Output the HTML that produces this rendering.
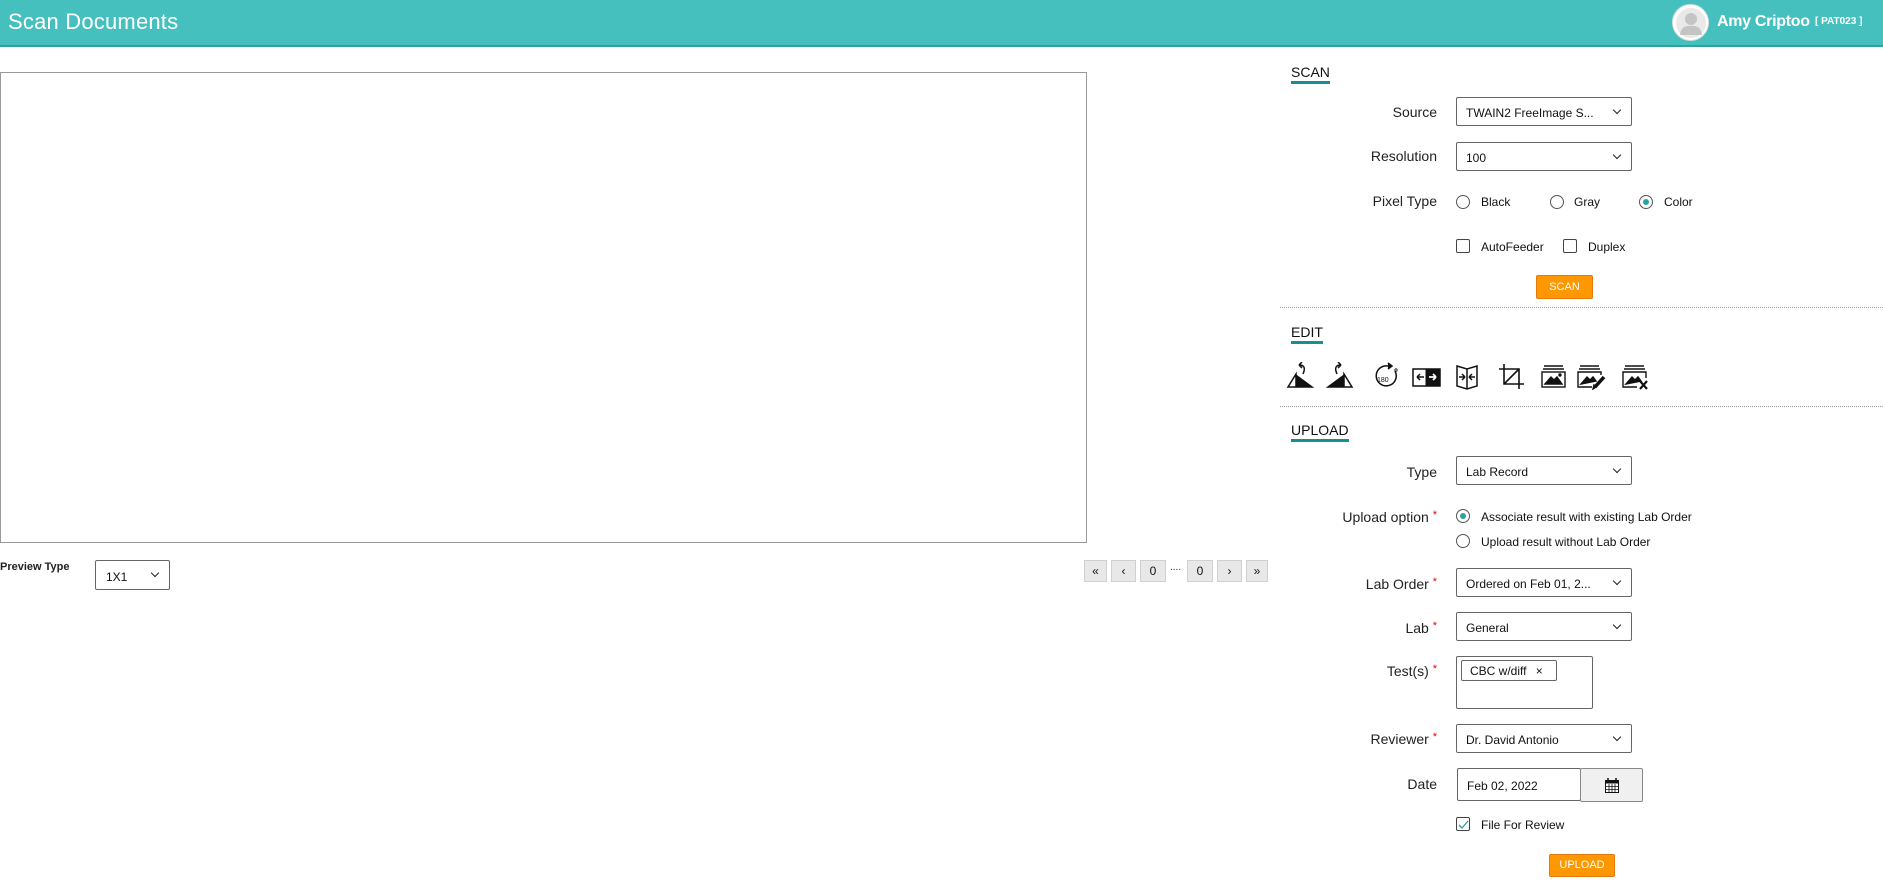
<!DOCTYPE html>
<html><head><meta charset="utf-8">
<style>
*{box-sizing:border-box;margin:0;padding:0}
body{width:1883px;height:891px;overflow:hidden;background:#fff;font-family:"Liberation Sans",sans-serif;color:#222;position:relative}
.a{position:absolute}
.hdr{left:0;top:0;width:1883px;height:47px;background:#46c0bf;border-bottom:2px solid #2ea3a2}
.title{left:8px;top:9px;font-size:22px;color:#fff;font-weight:300;letter-spacing:0.2px}
.lbl{font-size:14px;color:#222;text-align:right;width:200px;left:1237px}
.req{color:#e00;font-size:11px;vertical-align:top}
.sel{left:1456px;width:176px;height:29px;border:1px solid #666;border-radius:2px;font-size:12px;padding:8px 9px;color:#111}
.sel:after{content:"";position:absolute;right:11px;top:9px;width:5px;height:5px;border-right:1.5px solid #222;border-bottom:1.5px solid #222;transform:rotate(45deg)}
.rad{width:14px;height:14px;border:1px solid #555;border-radius:50%;background:#fff}
.rad.on:after{content:"";position:absolute;left:3px;top:3px;width:6px;height:6px;border-radius:50%;background:#2aa3a0}
.cb{width:14px;height:14px;border:1px solid #444;border-radius:2px}
.sm{font-size:12px;color:#111}
.sec{font-size:14px;color:#111;border-bottom:3px solid #14918c;padding-bottom:1px;left:1291px}
.dot{left:1280px;width:603px;border-top:1px dotted #999}
.btn{background:#ff9800;border:1px solid #e5780c;color:#fff;font-size:11px;text-align:center;border-radius:2px}
.pg{top:560px;height:22px;background:#e8e8e8;border:1px solid #d0d0d0;font-size:12px;text-align:center;line-height:20px;color:#111}
</style></head><body>
<div class="a hdr"></div>
<div class="a title">Scan Documents</div>
<div class="a" style="left:1672px;top:4px;width:37px;height:37px;border-radius:50%;background:#fff;border:1px solid #ddd;overflow:hidden">
<svg width="37" height="37" viewBox="0 0 37 37"><circle cx="18" cy="18" r="15" fill="#e9e9e9"/><circle cx="18" cy="14" r="6" fill="#c4c4c4"/><path d="M7 30 Q8 20 18 21 Q28 20 29 30 Z" fill="#c4c4c4"/></svg></div>
<div class="a" style="left:1717px;top:13px;font-size:16px;color:#fff;font-weight:bold;letter-spacing:-0.3px;white-space:nowrap">Amy Criptoo</div>
<div class="a" style="left:1815px;top:16px;font-size:10px;color:#fff;font-weight:bold;white-space:nowrap">[ PAT023 ]</div>

<div class="a" style="left:0;top:72px;width:1087px;height:471px;border:1px solid #999"></div>
<div class="a" style="left:0;top:561px;font-size:11px;font-weight:bold;color:#222">Preview Type</div>
<div class="a sel" style="left:95px;top:560px;width:75px;height:30px;padding:9px 10px;font-size:12px">1X1</div>

<div class="a pg" style="left:1084px;width:23px">«</div>
<div class="a pg" style="left:1111px;width:25px">‹</div>
<div class="a pg" style="left:1140px;width:26px">0</div>
<div class="a" style="left:1170px;top:562px;font-size:10px">....</div>
<div class="a pg" style="left:1187px;width:26px">0</div>
<div class="a pg" style="left:1217px;width:25px">›</div>
<div class="a pg" style="left:1246px;width:22px">»</div>

<div class="a sec" style="top:64px">SCAN</div>
<div class="a lbl" style="top:104px">Source</div>
<div class="a sel" style="top:97px">TWAIN2 FreeImage S...</div>
<div class="a lbl" style="top:148px">Resolution</div>
<div class="a sel" style="top:142px">100</div>
<div class="a lbl" style="top:193px">Pixel Type</div>
<div class="a rad" style="left:1456px;top:195px"></div><div class="a sm" style="left:1481px;top:195px">Black</div>
<div class="a rad" style="left:1550px;top:195px"></div><div class="a sm" style="left:1574px;top:195px">Gray</div>
<div class="a rad on" style="left:1639px;top:195px"></div><div class="a sm" style="left:1664px;top:195px">Color</div>
<div class="a cb" style="left:1456px;top:239px"></div><div class="a sm" style="left:1481px;top:240px">AutoFeeder</div>
<div class="a cb" style="left:1563px;top:239px"></div><div class="a sm" style="left:1588px;top:240px">Duplex</div>
<div class="a btn" style="left:1536px;top:275px;width:57px;height:24px;line-height:22px">SCAN</div>
<div class="a dot" style="top:307px"></div>

<div class="a sec" style="top:324px">EDIT</div>
<svg class="a" style="left:1286px;top:362px" width="380" height="28" viewBox="0 0 380 28" fill="#111" stroke="#111">
<g stroke-width="1.5" fill="none"><path d="M2 25 L10 12 L10 25 Z"/><path d="M11 25 L26 25 L11 14 Z" fill="#111"/><path d="M17 12 Q21 3 13 3 M13 3 L16 0 M13 3 L16 6"/></g>
<g transform="translate(42 0)" stroke-width="1.5" fill="none"><path d="M24 25 L16 12 L16 25 Z"/><path d="M15 25 L0 25 L15 14 Z" fill="#111"/><path d="M9 12 Q5 3 13 3 M13 3 L10 0 M13 3 L10 6"/></g>
<g transform="translate(88 0)" fill="none" stroke-width="1.5"><path d="M14 4 A10 10 0 1 0 21 9"/><path d="M14 1 L18 4 L14 7" fill="#111"/><text x="3" y="20" font-size="7" stroke="none" fill="#111" font-family="Liberation Sans">180</text><circle cx="22" cy="8" r="1.2" stroke-width="0.8"/></g>
<g transform="translate(127 4)"><rect x="0" y="3" width="27" height="17" fill="#fff" stroke-width="1.5"/><rect x="13" y="3" width="14" height="17"/><path d="M4 11 L11 11 M4 11 L7 8 M4 11 L7 14" stroke-width="1.5" fill="none"/><path d="M16 11 L23 11 M23 11 L20 8 M23 11 L20 14" stroke="#fff" stroke-width="1.8" fill="none"/></g>
<g transform="translate(170 2)" fill="none" stroke-width="1.5"><path d="M1 2 L11 5 L21 2 L21 22 L11 25 L1 22 Z M11 5 L11 25"/><path d="M3 13 L9 13 M9 13 L6 10 M9 13 L6 16 M19 13 L13 13 M13 13 L16 10 M13 13 L16 16"/></g>
<g transform="translate(213 2)" fill="none" stroke-width="1.6"><path d="M5 0 L5 20 L25 20 M0 5 L20 5 L20 25 M5 20 L20 5"/></g>
<g transform="translate(256 3)" fill="none" stroke-width="1.4"><path d="M2 1 L21 1 M1 4 L22 4"/><rect x="0" y="7" width="23" height="15"/><path d="M3 19 L9 12 L12 15 L15 12 L20 19 Z" fill="#111"/><circle cx="18" cy="10" r="1" fill="#111"/></g>
<g transform="translate(292 3)" fill="none" stroke-width="1.4"><path d="M2 1 L21 1 M1 4 L22 4"/><path d="M23 10 L23 7 L0 7 L0 22 L14 22"/><path d="M3 19 L9 12 L12 15 L15 12 L18 16 Z" fill="#111"/><path d="M17 22 L26 12" stroke-width="3.5"/><path d="M15 24 L16 20 L18 22 Z" fill="#111"/></g>
<g transform="translate(337 3)" fill="none" stroke-width="1.4"><path d="M2 1 L21 1 M1 4 L22 4"/><path d="M23 13 L23 7 L0 7 L0 22 L14 22"/><path d="M3 19 L9 12 L12 15 L15 12 L18 16 Z" fill="#111"/><path d="M17 16 L24 24 M24 16 L17 24" stroke-width="2.2"/></g>
</svg>
<div class="a dot" style="top:406px"></div>

<div class="a sec" style="top:422px">UPLOAD</div>
<div class="a lbl" style="top:464px">Type</div>
<div class="a sel" style="top:456px">Lab Record</div>
<div class="a lbl" style="top:509px">Upload option <span class="req">*</span></div>
<div class="a rad on" style="left:1456px;top:509px"></div><div class="a sm" style="left:1481px;top:510px">Associate result with existing Lab Order</div>
<div class="a rad" style="left:1456px;top:534px"></div><div class="a sm" style="left:1481px;top:535px">Upload result without Lab Order</div>
<div class="a lbl" style="top:576px">Lab Order <span class="req">*</span></div>
<div class="a sel" style="top:568px">Ordered on Feb 01, 2...</div>
<div class="a lbl" style="top:620px">Lab <span class="req">*</span></div>
<div class="a sel" style="top:612px">General</div>
<div class="a lbl" style="top:663px">Test(s) <span class="req">*</span></div>
<div class="a" style="left:1456px;top:656px;width:137px;height:53px;border:1px solid #666;border-radius:2px"></div>
<div class="a sm" style="left:1461px;top:660px;width:96px;height:21px;border:1px solid #666;border-radius:2px;padding:3px 8px">CBC w/diff <span style="margin-left:6px">×</span></div>
<div class="a lbl" style="top:731px">Reviewer <span class="req">*</span></div>
<div class="a sel" style="top:724px">Dr. David Antonio</div>
<div class="a lbl" style="top:776px">Date</div>
<div class="a sm" style="left:1457px;top:768px;width:124px;height:33px;border:1px solid #666;border-radius:2px;padding:10px 9px">Feb 02, 2022</div>
<div class="a" style="left:1580px;top:768px;width:63px;height:34px;border:1px solid #888;border-radius:2px;background:#f0f0f0">
<svg class="a" style="left:24px;top:9px" width="14" height="15" viewBox="0 0 14 15"><rect x="0.5" y="2.5" width="13" height="12" fill="#fff" stroke="#111"/><rect x="0.5" y="2.5" width="13" height="3" fill="#111"/><path d="M3 0v4M11 0v4" stroke="#111" stroke-width="1.5"/><path d="M1 8.5h12M1 11.5h12M4 6v9M7 6v9M10 6v9" stroke="#111" stroke-width="0.8"/></svg></div>
<div class="a cb" style="left:1456px;top:817px"><svg class="a" style="left:1px;top:1px" width="11" height="11" viewBox="0 0 11 11"><path d="M1 6 L4 9 L10 2" stroke="#2aa3a0" stroke-width="1.3" fill="none"/></svg></div>
<div class="a sm" style="left:1481px;top:818px">File For Review</div>
<div class="a btn" style="left:1549px;top:854px;width:66px;height:23px;line-height:21px">UPLOAD</div>
</body></html>
